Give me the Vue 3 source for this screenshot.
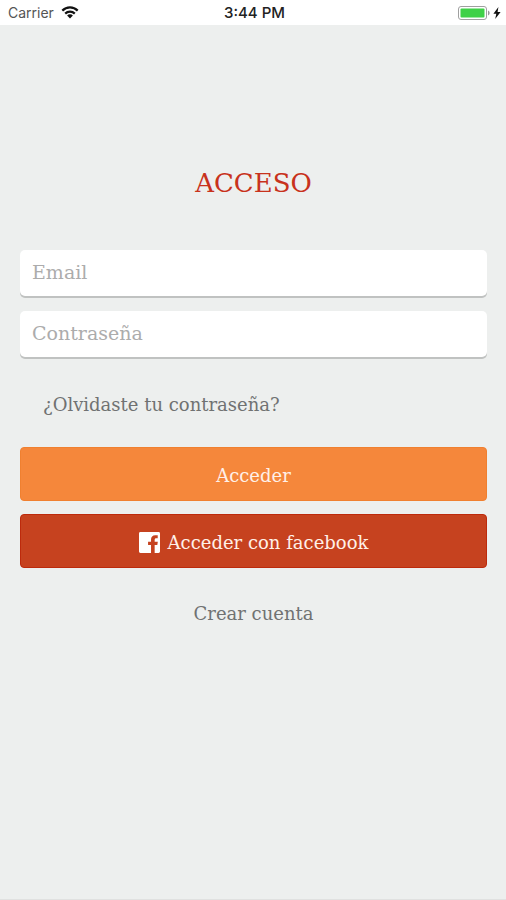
<script setup>
import { ref } from 'vue'

const email = ref('')
const password = ref('')
</script>

<template>
  <div class="screen">
    <header class="status">
      <div class="carrier">
        <span>Carrier</span>
        <svg class="wifi" viewBox="0 0 18 13" aria-hidden="true">
          <g fill="none" stroke="#111" stroke-width="2.2">
            <path d="M1.3 4.6C5.6.3 12.4.3 16.7 4.6" />
            <path d="M4.2 7.6C6.9 4.9 11.1 4.9 13.8 7.6" />
          </g>
          <path d="M6.1 9.5C7.7 7.9 10.3 7.9 11.9 9.5L9 12.5Z" fill="#111" />
        </svg>
      </div>
      <span class="time">3:44 PM</span>
      <div class="power">
        <svg class="battery" viewBox="0 0 32 14" aria-hidden="true">
          <rect x=".5" y=".5" width="28" height="13" rx="2.5" fill="#fff" stroke="#a0a0a0" />
          <rect x="2.5" y="2.5" width="24" height="9" rx="1" fill="#3fd148" />
          <path d="M30 4.5C32.2 5.4 32.2 8.6 30 9.5Z" fill="#999" />
        </svg>
        <svg class="bolt" viewBox="0 0 8 12" aria-hidden="true">
          <path d="M5.4 0L.4 6.8H3.3L2.2 12L7.6 4.9H4.6Z" fill="#111" />
        </svg>
      </div>
    </header>

    <main class="content">
      <h1 class="title">ACCESO</h1>
      <form class="form" @submit.prevent>
        <input v-model="email" class="field" type="email" placeholder="Email" aria-label="Email" />
        <input v-model="password" class="field" type="password" placeholder="Contraseña" aria-label="Contraseña" />
        <a class="forgot" href="#">¿Olvidaste tu contraseña?</a>
        <button class="button primary" type="submit">Acceder</button>
        <button class="button facebook" type="button">
          <svg class="logo" viewBox="0 0 22 22" aria-hidden="true">
            <path
              fill="#fff"
              d="M1.5 0H20.5Q22 0 22 1.5V20.5Q22 22 20.5 22H16.4V13.6H19.2L19.7 10.3H16.4V8.3C16.4 7.2 16.9 6.6 18 6.6H19.6V3.5C19 3.4 18 3.3 17 3.3C14.2 3.3 12.6 5 12.6 7.9V10.3H9.5V13.6H12.6V22H1.5Q0 22 0 20.5V1.5Q0 0 1.5 0Z"
            />
          </svg>
          <span>Acceder con facebook</span>
        </button>
      </form>
      <a class="create" href="#">Crear cuenta</a>
    </main>
  </div>
</template>

<style>
body {
  margin: 0;
  background: #edefee;
}
</style>

<style scoped>
.screen {
  box-sizing: border-box;
  display: flex;
  flex-direction: column;
  min-height: 100vh;
  background: #edefee;
  border-bottom: 1px solid #e0e1e0;
  font-family: "DejaVu Serif", serif;
}

.status {
  display: grid;
  grid-template-columns: 1fr auto 1fr;
  align-items: center;
  height: 25px;
  padding: 0 5px 0 8px;
  background: #fff;
  color: #222;
  font-family: Inter, "Liberation Sans", sans-serif;
  font-size: 14px;
}

.carrier,
.power {
  display: flex;
  align-items: center;
  gap: 7px;
}

.carrier {
  color: #555;
}

.time {
  font-size: 15px;
  font-weight: 500;
}

.power {
  justify-content: flex-end;
  gap: 3px;
}

.wifi {
  width: 18px;
  height: 13px;
}

.battery {
  width: 32px;
  height: 14px;
}

.bolt {
  width: 8px;
  height: 12px;
}

.content {
  display: flex;
  flex-direction: column;
  align-items: center;
  padding: 138px 19px 0 20px;
}

.title {
  margin: 0 0 47px;
  color: #c8321c;
  font-size: 26px;
  font-weight: 400;
  line-height: 40px;
}

.form {
  display: flex;
  flex-direction: column;
  align-self: stretch;
}

.field {
  box-sizing: border-box;
  width: 100%;
  height: 46px;
  margin: 0 0 15px;
  padding: 0 12px 2px;
  border: 0;
  border-radius: 5px;
  background: #fff;
  box-shadow: 0 2px 0 #c0c2c1;
  color: #555;
  font-family: inherit;
  font-size: 19px;
}

.field::placeholder {
  color: #acacac;
  opacity: 1;
}

.forgot,
.create {
  color: #707272;
  font-size: 18px;
  line-height: 28px;
  text-decoration: none;
}

.forgot {
  align-self: flex-start;
  margin: 19px 23px 28px;
}

.create {
  margin-top: 32px;
}

.button {
  display: flex;
  align-items: center;
  justify-content: center;
  gap: 8px;
  height: 54px;
  padding: 2px 12px 0;
  border: 1px solid;
  border-radius: 4px;
  color: #fff0e8;
  font-family: inherit;
  font-size: 18px;
}

.primary {
  margin-bottom: 13px;
  border-color: #f08030;
  background: #f5873b;
}

.facebook {
  border-color: #bd2a0c;
  background: #c6421f;
}

.logo {
  width: 21px;
  height: 21px;
}
</style>
